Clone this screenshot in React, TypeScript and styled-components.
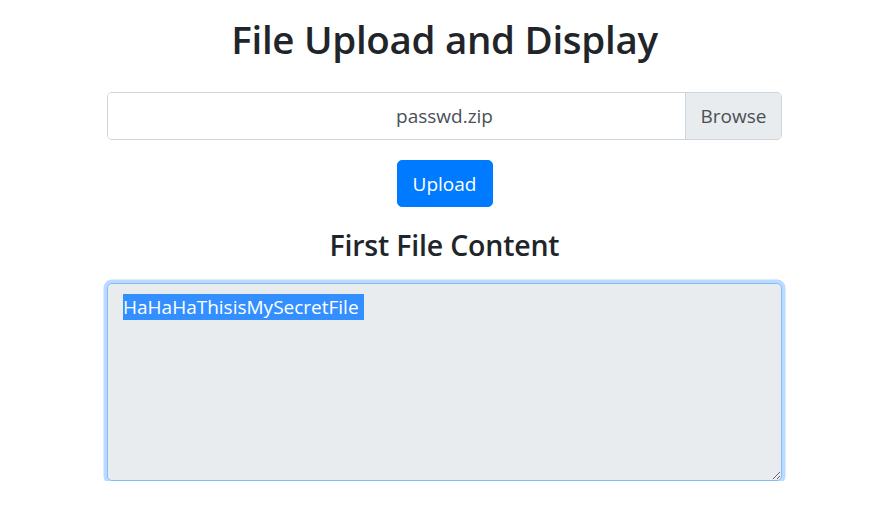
import React from "react";
import styled, { createGlobalStyle } from "styled-components";

const Global = createGlobalStyle`
  html, body { margin: 0; padding: 0; background: #fff; }
  body { font-family: "Open Sans", "Noto Sans", sans-serif; color: #212529; }
`;

const Page = styled.div`
  width: 871px;
  display: flex;
  justify-content: center;
`;

const Container = styled.main`
  width: 675px;
  margin-left: 18px;
  padding-top: 18px;
  display: flex;
  flex-direction: column;
  align-items: center;
  text-align: center;
`;

const Title = styled.h1`
  margin: 0 0 32px;
  font-size: 38.5px;
  line-height: 42px;
  font-weight: 600;
  letter-spacing: -0.3px;
  color: #212529;
`;

const FileBox = styled.div`
  width: 100%;
  height: 48px;
  box-sizing: border-box;
  display: flex;
  border: 1px solid #ced4da;
  border-radius: 5px;
  overflow: hidden;
  font-size: 19px;
  color: #495057;
`;

const FileName = styled.div`
  flex: 1;
  display: flex;
  align-items: center;
  justify-content: center;
  padding-left: 96px;
  background: #fff;
`;

const BrowseTag = styled.div`
  width: 95px;
  display: flex;
  align-items: center;
  justify-content: center;
  background: #e9ecef;
  border-left: 1px solid #ced4da;
`;

const UploadButton = styled.button`
  margin-top: 20px;
  height: 47px;
  width: 96px;
  padding: 0;
  border: 1px solid #007bff;
  border-radius: 5px;
  background: #007bff;
  color: #fff;
  font-family: inherit;
  font-size: 19px;
  line-height: 30px;
  cursor: pointer;
`;

const SubTitle = styled.h3`
  margin: 23px 0 22px;
  font-size: 28.5px;
  line-height: 31px;
  font-weight: 600;
  letter-spacing: -0.2px;
  color: #212529;
`;

const ContentArea = styled.div`
  width: 100%;
  height: 198px;
  box-sizing: border-box;
  padding: 8px 15px;
  border: 1px solid #80bdff;
  border-radius: 5px;
  box-shadow: 0 0 0 3.5px rgba(0, 123, 255, 0.27);
  background: #e9ecef;
  text-align: left;
  font-size: 19px;
  line-height: 30px;
  color: #495057;
  overflow: auto;
  resize: vertical;
`;

const Selected = styled.span`
  background: #338fff;
  color: #fff;
`;

export default function App() {
  return (
    <>
      <Global />
      <Page>
        <Container>
          <Title>File Upload and Display</Title>
          <FileBox>
            <FileName>passwd.zip</FileName>
            <BrowseTag>Browse</BrowseTag>
          </FileBox>
          <UploadButton>Upload</UploadButton>
          <SubTitle>First File Content</SubTitle>
          <ContentArea>
            <Selected>HaHaHaThisisMySecretFile&nbsp;</Selected>
          </ContentArea>
        </Container>
      </Page>
    </>
  );
}
